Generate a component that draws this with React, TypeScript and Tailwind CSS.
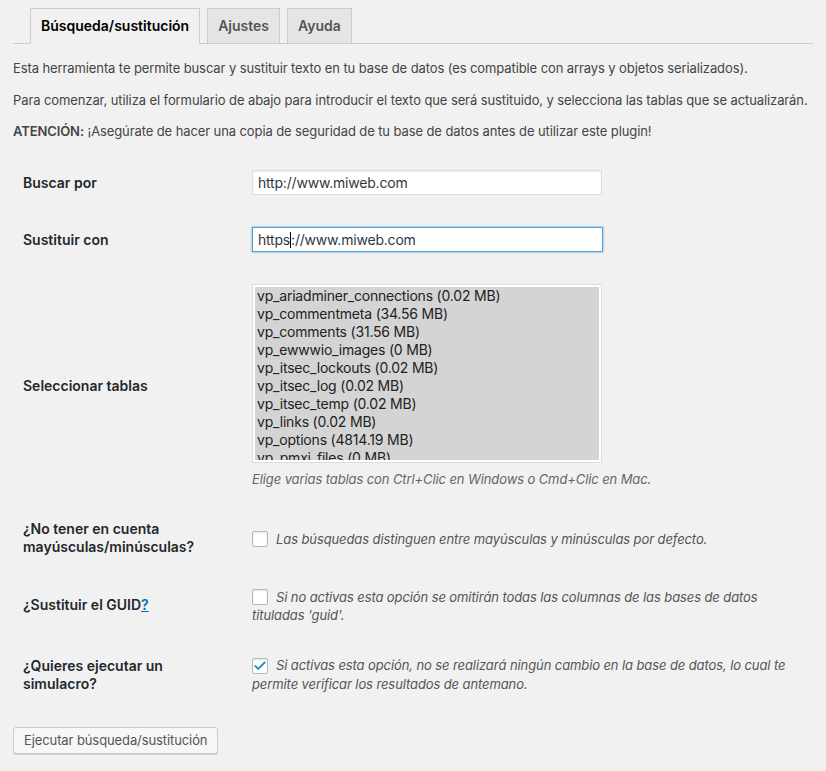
import { Check } from 'lucide-react';

const TABLES = [
  'vp_ariadminer_connections (0.02 MB)',
  'vp_commentmeta (34.56 MB)',
  'vp_comments (31.56 MB)',
  'vp_ewwwio_images (0 MB)',
  'vp_itsec_lockouts (0.02 MB)',
  'vp_itsec_log (0.02 MB)',
  'vp_itsec_temp (0.02 MB)',
  'vp_links (0.02 MB)',
  'vp_options (4814.19 MB)',
  'vp_pmxi_files (0 MB)',
];

const Checkbox = ({ checked }: { checked?: boolean }) => (
  <span className="mr-[8px] inline-flex h-[16px] w-[16px] translate-y-[3px] items-center justify-center rounded-[2px] border border-[#b4b9be] bg-white align-baseline shadow-[inset_0_1px_2px_rgba(0,0,0,0.1)]">
    {checked && <Check size={14} strokeWidth={3.2} className="text-[#1e8cbe]" />}
  </span>
);

const Row = ({
  label,
  children,
  className,
}: {
  label: React.ReactNode;
  children: React.ReactNode;
  className?: string;
}) => (
  <div className={`flex items-center ${className ?? ''}`}>
    <div className="w-[239px] shrink-0 pl-[10px] text-[14px] leading-[18px] font-semibold text-[#23282d]">{label}</div>
    <div className="w-[551px]">{children}</div>
  </div>
);

const App = () => {
  return (
    <div className="min-h-[771px] bg-[#f1f1f1] px-[13px] pt-[8px] font-['Inter',sans-serif] text-[13px] text-[#444]">
      {/* pestañas */}
      <div className="flex gap-[7px] border-b border-[#ccc] pl-[17px]">
        <div className="-mb-px h-[36px] border border-[#ccc] border-b-[#f1f1f1] bg-[#f1f1f1] px-[10px] text-[14px] leading-[34px] font-semibold text-black">
          Búsqueda/sustitución
        </div>
        <div className="h-[35px] border border-b-0 border-[#ccc] bg-[#e5e5e5] px-[10px] text-[14px] leading-[34px] font-semibold text-[#555]">
          Ajustes
        </div>
        <div className="h-[35px] border border-b-0 border-[#ccc] bg-[#e5e5e5] px-[10px] text-[14px] leading-[34px] font-semibold text-[#555]">
          Ayuda
        </div>
      </div>

      <div className="tracking-[-0.1px] whitespace-nowrap">
        <p className="mt-[15px] leading-[18px]">
          Esta herramienta te permite buscar y sustituir texto en tu base de datos (es compatible con arrays y objetos serializados).
        </p>
        <p className="mt-[14px] leading-[18px]">
          Para comenzar, utiliza el formulario de abajo para introducir el texto que será sustituido, y selecciona las tablas que se actualizarán.
        </p>
        <p className="mt-[13px] leading-[18px]">
          <strong className="font-semibold">ATENCIÓN:</strong> ¡Asegúrate de hacer una copia de seguridad de tu base de datos antes de utilizar este plugin!
        </p>
      </div>

      {/* formulario */}
      <div className="mt-[30px] flex flex-col">
        <Row label="Buscar por">
          <div className="h-[25px] w-[350px] border border-[#ddd] bg-white pl-[5px] text-[14px] leading-[23px] tracking-[-0.2px] text-[#32373c] shadow-[inset_0_1px_2px_rgba(0,0,0,0.07)]">
            http://www.miweb.com
          </div>
        </Row>

        <Row label="Sustituir con" className="mt-[32px]">
          <div className="h-[25px] w-[351px] border border-[#5b9dd9] bg-white pl-[5px] text-[14px] leading-[23px] tracking-[-0.2px] text-[#32373c] shadow-[0_0_2px_rgba(30,140,190,0.8)]">
            https<span className="inline-block h-[16px] w-px translate-y-[3px] bg-black" />://www.miweb.com
          </div>
        </Row>

        <Row label="Seleccionar tablas" className="mt-[32px]">
          <div className="h-[179px] w-[350px] overflow-hidden border border-[#ddd] bg-white p-[2px]">
            <div className="h-full overflow-hidden bg-[#d4d4d4] text-[14px] leading-[18px] tracking-[-0.2px] text-[#222]">
              {TABLES.map((t) => (
                <div key={t} className="pl-[2px]">{t}</div>
              ))}
            </div>
          </div>
          <p className="mt-[7px] leading-[18px] tracking-[-0.1px] text-[#666] italic">
            Elige varias tablas con Ctrl+Clic en Windows o Cmd+Clic en Mac.
          </p>
        </Row>

        <Row
          className="mt-[32px]"
          label={
            <>
              ¿No tener en cuenta
              <br />
              mayúsculas/minúsculas?
            </>
          }
        >
          <p className="leading-[18px] tracking-[-0.1px] text-[#555] italic">
            <Checkbox />
            Las búsquedas distinguen entre mayúsculas y minúsculas por defecto.
          </p>
        </Row>

        <Row
          className="mt-[30px]"
          label={
            <>
              ¿Sustituir el GUID<a className="text-[#0073aa] underline">?</a>
            </>
          }
        >
          <p className="leading-[18px] tracking-[-0.1px] text-[#555] italic">
            <Checkbox />
            Si no activas esta opción se omitirán todas las columnas de las bases de datos
            <br />
            tituladas 'guid'.
          </p>
        </Row>

        <Row
          className="mt-[31px]"
          label={
            <>
              ¿Quieres ejecutar un
              <br />
              simulacro?
            </>
          }
        >
          <p className="leading-[19px] tracking-[-0.1px] text-[#555] italic">
            <Checkbox checked />
            Si activas esta opción, no se realizará ningún cambio en la base de datos, lo cual te
            <br />
            permite verificar los resultados de antemano.
          </p>
        </Row>
      </div>

      <button className="mt-[33px] h-[27px] rounded-[3px] border border-[#ccc] bg-[#f7f7f7] px-[10px] text-[13px] tracking-[-0.1px] text-[#555] shadow-[0_1px_0_#ccc]">
        Ejecutar búsqueda/sustitución
      </button>
    </div>
  );
};

export default App;
